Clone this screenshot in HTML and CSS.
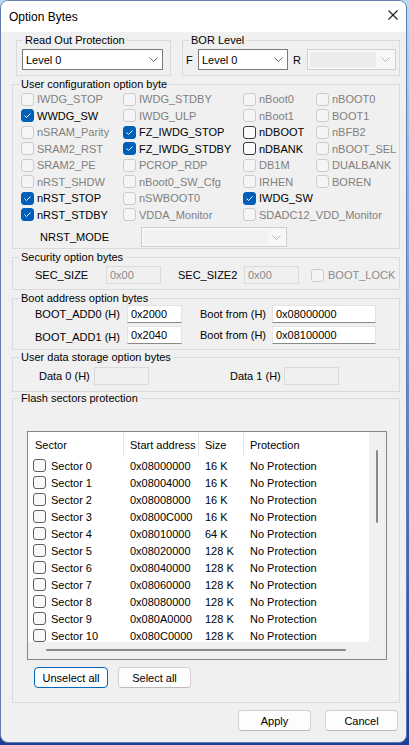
FILE: index.html
```html
<!DOCTYPE html>
<html>
<head>
<meta charset="utf-8">
<title>Option Bytes</title>
<link rel="stylesheet" href="styles.css">
</head>
<body>
<div class="window">
  <div class="titlebar">
    <span class="title">Option Bytes</span>
    <svg class="close" width="10" height="10" viewBox="0 0 10 10"><path d="M0.5 0.5 L9.5 9.5 M9.5 0.5 L0.5 9.5" stroke="#1a1a1a" stroke-width="1.1" fill="none"/></svg>
  </div>
  <div class="content">
    <div class="row-top">
      <fieldset class="group g-rdp">
        <legend>Read Out Protection</legend>
        <div class="inner rdp-inner">
          <div class="combo w141"><span>Level 0</span><svg class="chev" width="9" height="5" viewBox="0 0 9 5"><polyline points="0.5,0.5 4.5,4.5 8.5,0.5" fill="none" stroke="#6a6a6a" stroke-width="1"/></svg></div>
        </div>
      </fieldset>
      <fieldset class="group g-bor">
        <legend>BOR Level</legend>
        <div class="inner bor-inner">
          <span class="lbl-f">F</span>
          <div class="combo w90"><span>Level 0</span><svg class="chev" width="9" height="5" viewBox="0 0 9 5"><polyline points="0.5,0.5 4.5,4.5 8.5,0.5" fill="none" stroke="#6a6a6a" stroke-width="1"/></svg></div>
          <span class="lbl-r">R</span>
          <div class="combo disabled w89"><span class="field"></span><svg class="chev" width="9" height="5" viewBox="0 0 9 5"><polyline points="0.5,0.5 4.5,4.5 8.5,0.5" fill="none" stroke="#b5b5b5" stroke-width="1"/></svg></div>
        </div>
      </fieldset>
    </div>

    <fieldset class="group g-user">
      <legend>User configuration option byte</legend>
      <div class="inner user-inner">
        <div class="opt-grid">
          <div class="opt dis"><span class="cb"></span>IWDG_STOP</div>
          <div class="opt dis"><span class="cb"></span>IWDG_STDBY</div>
          <div class="opt dis"><span class="cb"></span>nBoot0</div>
          <div class="opt dis"><span class="cb"></span>nBOOT0</div>

          <div class="opt"><span class="cb on"><svg width="11" height="11" viewBox="0 0 11 11"><polyline points="2.5,5.5 4.5,7.5 8.5,3.5" fill="none" stroke="#fff" stroke-width="1"/></svg></span>WWDG_SW</div>
          <div class="opt dis"><span class="cb"></span>IWDG_ULP</div>
          <div class="opt dis"><span class="cb"></span>nBoot1</div>
          <div class="opt dis"><span class="cb"></span>BOOT1</div>

          <div class="opt dis"><span class="cb"></span>nSRAM_Parity</div>
          <div class="opt"><span class="cb on"><svg width="11" height="11" viewBox="0 0 11 11"><polyline points="2.5,5.5 4.5,7.5 8.5,3.5" fill="none" stroke="#fff" stroke-width="1"/></svg></span>FZ_IWDG_STOP</div>
          <div class="opt"><span class="cb en"></span>nDBOOT</div>
          <div class="opt dis"><span class="cb"></span>nBFB2</div>

          <div class="opt dis"><span class="cb"></span>SRAM2_RST</div>
          <div class="opt"><span class="cb on"><svg width="11" height="11" viewBox="0 0 11 11"><polyline points="2.5,5.5 4.5,7.5 8.5,3.5" fill="none" stroke="#fff" stroke-width="1"/></svg></span>FZ_IWDG_STDBY</div>
          <div class="opt"><span class="cb en"></span>nDBANK</div>
          <div class="opt dis"><span class="cb"></span>nBOOT_SEL</div>

          <div class="opt dis"><span class="cb"></span>SRAM2_PE</div>
          <div class="opt dis"><span class="cb"></span>PCROP_RDP</div>
          <div class="opt dis"><span class="cb"></span>DB1M</div>
          <div class="opt dis"><span class="cb"></span>DUALBANK</div>

          <div class="opt dis"><span class="cb"></span>nRST_SHDW</div>
          <div class="opt dis"><span class="cb"></span>nBoot0_SW_Cfg</div>
          <div class="opt dis"><span class="cb"></span>IRHEN</div>
          <div class="opt dis"><span class="cb"></span>BOREN</div>

          <div class="opt"><span class="cb on"><svg width="11" height="11" viewBox="0 0 11 11"><polyline points="2.5,5.5 4.5,7.5 8.5,3.5" fill="none" stroke="#fff" stroke-width="1"/></svg></span>nRST_STOP</div>
          <div class="opt dis"><span class="cb"></span>nSWBOOT0</div>
          <div class="opt"><span class="cb on"><svg width="11" height="11" viewBox="0 0 11 11"><polyline points="2.5,5.5 4.5,7.5 8.5,3.5" fill="none" stroke="#fff" stroke-width="1"/></svg></span>IWDG_SW</div>
          <div class="opt empty"></div>

          <div class="opt"><span class="cb on"><svg width="11" height="11" viewBox="0 0 11 11"><polyline points="2.5,5.5 4.5,7.5 8.5,3.5" fill="none" stroke="#fff" stroke-width="1"/></svg></span>nRST_STDBY</div>
          <div class="opt dis"><span class="cb"></span>VDDA_Monitor</div>
          <div class="opt dis span2"><span class="cb"></span>SDADC12_VDD_Monitor</div>
        </div>
        <div class="nrst-row">
          <span class="nrst-label">NRST_MODE</span>
          <div class="combo disabled w146"><span class="field"></span><svg class="chev" width="9" height="5" viewBox="0 0 9 5"><polyline points="0.5,0.5 4.5,4.5 8.5,0.5" fill="none" stroke="#b5b5b5" stroke-width="1"/></svg></div>
        </div>
      </div>
    </fieldset>

    <fieldset class="group g-sec">
      <legend>Security option bytes</legend>
      <div class="inner sec-inner">
        <span class="lbl w71">SEC_SIZE</span>
        <div class="tb dis w55">0x00</div>
        <span class="lbl w66 ml17">SEC_SIZE2</span>
        <div class="tb dis w55">0x00</div>
        <span class="cb boot-lock-cb"></span>
        <span class="lbl dis-text">BOOT_LOCK</span>
      </div>
    </fieldset>

    <fieldset class="group g-boot">
      <legend>Boot address option bytes</legend>
      <div class="inner boot-inner">
        <div class="boot-row">
          <span class="lbl w92">BOOT_ADD0 (H)</span>
          <div class="tb w55">0x2000</div>
          <span class="lbl w72 ml18">Boot from (H)</span>
          <div class="tb w104">0x08000000</div>
        </div>
        <div class="boot-row">
          <span class="lbl w92 low">BOOT_ADD1 (H)</span>
          <div class="tb w55">0x2040</div>
          <span class="lbl w72 ml18">Boot from (H)</span>
          <div class="tb w104">0x08100000</div>
        </div>
      </div>
    </fieldset>

    <fieldset class="group g-data">
      <legend>User data storage option bytes</legend>
      <div class="inner data-inner">
        <span class="lbl w55">Data 0 (H)</span>
        <div class="tb dis w55"></div>
        <span class="lbl w54 ml81">Data 1 (H)</span>
        <div class="tb dis w55"></div>
      </div>
    </fieldset>

    <fieldset class="group g-flash">
      <legend>Flash sectors protection</legend>
      <div class="inner flash-inner">
        <div class="list">
          <div class="list-body">
            <div class="lv-head">
              <div class="c1">Sector</div>
              <div class="c2">Start address</div>
              <div class="c3">Size</div>
              <div class="c4">Protection</div>
            </div>
            <div class="lv-row"><div class="c1"><span class="cb"></span>Sector 0</div><div class="c2">0x08000000</div><div class="c3">16 K</div><div class="c4">No Protection</div></div>
            <div class="lv-row"><div class="c1"><span class="cb"></span>Sector 1</div><div class="c2">0x08004000</div><div class="c3">16 K</div><div class="c4">No Protection</div></div>
            <div class="lv-row"><div class="c1"><span class="cb"></span>Sector 2</div><div class="c2">0x08008000</div><div class="c3">16 K</div><div class="c4">No Protection</div></div>
            <div class="lv-row"><div class="c1"><span class="cb"></span>Sector 3</div><div class="c2">0x0800C000</div><div class="c3">16 K</div><div class="c4">No Protection</div></div>
            <div class="lv-row"><div class="c1"><span class="cb"></span>Sector 4</div><div class="c2">0x08010000</div><div class="c3">64 K</div><div class="c4">No Protection</div></div>
            <div class="lv-row"><div class="c1"><span class="cb"></span>Sector 5</div><div class="c2">0x08020000</div><div class="c3">128 K</div><div class="c4">No Protection</div></div>
            <div class="lv-row"><div class="c1"><span class="cb"></span>Sector 6</div><div class="c2">0x08040000</div><div class="c3">128 K</div><div class="c4">No Protection</div></div>
            <div class="lv-row"><div class="c1"><span class="cb"></span>Sector 7</div><div class="c2">0x08060000</div><div class="c3">128 K</div><div class="c4">No Protection</div></div>
            <div class="lv-row"><div class="c1"><span class="cb"></span>Sector 8</div><div class="c2">0x08080000</div><div class="c3">128 K</div><div class="c4">No Protection</div></div>
            <div class="lv-row"><div class="c1"><span class="cb"></span>Sector 9</div><div class="c2">0x080A0000</div><div class="c3">128 K</div><div class="c4">No Protection</div></div>
            <div class="lv-row"><div class="c1"><span class="cb"></span>Sector 10</div><div class="c2">0x080C0000</div><div class="c3">128 K</div><div class="c4">No Protection</div></div>
          </div>
          <div class="vscroll"><div class="vthumb"></div></div>
          <div class="hscroll"><div class="hthumb"></div></div>
          <div class="corner"></div>
        </div>
        <div class="sel-buttons">
          <button class="btn focus w74">Unselect all</button>
          <button class="btn w73">Select all</button>
        </div>
      </div>
    </fieldset>

    <div class="dialog-buttons">
      <button class="btn w73">Apply</button>
      <button class="btn w73">Cancel</button>
    </div>
  </div>
</div>
</body>
</html>
```

FILE: styles.css
```css
* { box-sizing: border-box; }
html, body { margin: 0; padding: 0; }
body {
  width: 409px;
  height: 745px;
  overflow: hidden;
  background: linear-gradient(180deg, #bcd8f0 0%, #6c9ad6 45%, #1c3f98 100%);
  font-family: "Liberation Sans", Arial, sans-serif;
  font-size: 11px;
  color: #000;
}
.window {
  width: 407px;
  height: 743px;
  background: #f0f0f0;
  border: 1px solid #5f7db3;
  border-radius: 8px;
  overflow: hidden;
  display: flex;
  flex-direction: column;
}
.titlebar {
  flex: none;
  height: 31px;
  background: #ffffff;
  display: flex;
  align-items: center;
  justify-content: space-between;
  padding: 0 8px 0 8px;
}
.title { font-size: 12px; color: #000; }
.close { margin-top: -3px; }

.content {
  display: flex;
  flex-direction: column;
  padding: 0 6px 0 11px;
}

.group {
  border: 1px solid #dadada;
  margin: 2px 0 0 0;
  padding: 0;
  min-width: 0;
}
.group > legend {
  padding: 0 2px;
  margin-left: 6px;
  line-height: 13px;
  font-size: 11px;
}
.g-data { margin-top: 1px; }
.g-flash { margin-top: 0; }

.row-top { display: flex; gap: 11px; padding-left: 4px; }
.g-rdp { width: 155px; }
.g-bor { width: 218px; }
.rdp-inner { padding: 2px 0 5px 5px; }
.bor-inner { padding: 2px 0 5px 3px; display: flex; align-items: center; }
.lbl-f { width: 7px; margin-right: 5px; }
.lbl-r { width: 8px; margin-left: 5px; margin-right: 6px; }

.combo {
  height: 21px;
  border: 1px solid #7a7a7a;
  background: #ffffff;
  display: flex;
  align-items: center;
  justify-content: space-between;
  padding: 0 4px 0 3px;
  flex: none;
}
.combo.disabled {
  border-color: #cfcfcf;
  background: #f7f7f7;
  padding: 0 5px 0 2px;
}
.combo.disabled .field {
  align-self: stretch;
  margin: 2px 0;
  width: 66px;
  background: #ececec;
}
.combo.w146 { height: 20px; }
.combo.w146 .field { width: 124px; background: #f2f2f2; }
.w141 { width: 141px; }
.w90 { width: 90px; }
.w89 { width: 89px; }
.w146 { width: 146px; }

/* user configuration */
.user-inner { padding: 0 0 1px 8px; }
.opt-grid {
  display: grid;
  grid-template-columns: 102px 120px 73px 1fr;
  grid-template-rows: repeat(8, 16.5px);
}
.opt {
  display: flex;
  align-items: center;
  gap: 3px;
  white-space: nowrap;
}
.opt.dis { color: #7f7f7f; }
.opt.span2 { grid-column: span 2; }

.cb {
  width: 13px;
  height: 13px;
  border: 1px solid #5f5f5f;
  border-radius: 3px;
  background: #f9f9f9;
  flex: none;
  display: inline-flex;
  align-items: center;
  justify-content: center;
}
.opt.dis .cb, .boot-lock-cb { border-color: #cccccc; background: #f5f5f5; }
.cb.en { border-color: #3a3a3a; background: #fbfbfb; }
.cb.on { border-color: #005fb8; background: #005fb8; }

.nrst-row { display: flex; align-items: center; margin-top: 4px; }
.nrst-label { width: 120px; padding-left: 19px; flex: none; }

/* text boxes and labels */
.lbl { flex: none; white-space: nowrap; }
.w71 { width: 71px; }
.w66 { width: 66px; }
.w92 { width: 92px; }
.w72 { width: 72px; }
.w55 { width: 55px; }
.w54 { width: 54px; }
.w104 { width: 104px; }
.ml17 { margin-left: 17px; }
.ml18 { margin-left: 18px; }
.ml81 { margin-left: 81px; }
.low { padding-top: 4px; }

.tb {
  flex: none;
  height: 18px;
  background: #ffffff;
  border: 1px solid #e3e3e3;
  border-bottom-color: #8a8a8a;
  padding: 0 3px;
  display: flex;
  align-items: center;
}
.tb.dis {
  background: #f0f0f0;
  border: 1px solid #dadada;
  color: #8a8a8a;
}
.dis-text { color: #8a8a8a; }

.sec-inner { display: flex; align-items: center; padding: 2px 0 5px 22px; }
.boot-lock-cb { margin-left: 12px; margin-right: 4px; }

.boot-inner { display: flex; flex-direction: column; gap: 3px; padding: 0 0 5px 22px; }
.boot-row { display: flex; align-items: center; }

.data-inner { display: flex; align-items: center; padding: 3px 0 6px 26px; }

/* flash list */
.flash-inner { padding: 26px 0 14px 14px; }
.list {
  width: 360px;
  height: 229px;
  border: 1px solid #828790;
  display: grid;
  grid-template-columns: 341px 17px;
  grid-template-rows: 210px 17px;
  background: #fff;
}
.list-body { background: #fff; overflow: hidden; }
.lv-head, .lv-row {
  display: grid;
  grid-template-columns: 96px 75px 45px 1fr;
  white-space: nowrap;
}
.lv-head { height: 25px; }
.lv-head > div {
  display: flex;
  align-items: center;
  padding-left: 6px;
  border-right: 1px solid #e5e5e5;
}
.lv-head > .c1 { padding-left: 7px; }
.lv-head > .c4 { border-right: none; }
.lv-row { height: 17px; }
.lv-row > div {
  display: flex;
  align-items: center;
  padding-left: 6px;
  border-right: 1px solid transparent;
}
.lv-row > .c1 { padding-left: 5px; gap: 5px; }
.lv-row > .c4 { border-right: none; }

.vscroll { background: #f0f0f0; }
.vthumb {
  width: 2px;
  height: 73px;
  margin: 18px 0 0 7px;
  background: #8a8a8a;
  border-radius: 1px;
}
.hscroll { background: #f0f0f0; }
.hthumb {
  width: 300px;
  height: 2px;
  margin: 7px 0 0 18px;
  background: #8a8a8a;
  border-radius: 1px;
}
.corner { background: #f0f0f0; }

.sel-buttons { display: flex; gap: 10px; margin-top: 7px; padding-left: 7px; }

.btn {
  height: 21px;
  background: #fdfdfd;
  border: 1px solid #d0d0d0;
  border-bottom-color: #bcbcbc;
  border-radius: 4px;
  font-family: "Liberation Sans", Arial, sans-serif;
  font-size: 11px;
  color: #000;
  padding: 0;
  display: flex;
  align-items: center;
  justify-content: center;
}
.btn.focus { border: 1px solid #0067c0; }
.w74 { width: 74px; }
.w73 { width: 73px; }

.dialog-buttons {
  display: flex;
  justify-content: flex-end;
  gap: 14px;
  margin-top: 7px;
  padding-right: 2px;
}
```
